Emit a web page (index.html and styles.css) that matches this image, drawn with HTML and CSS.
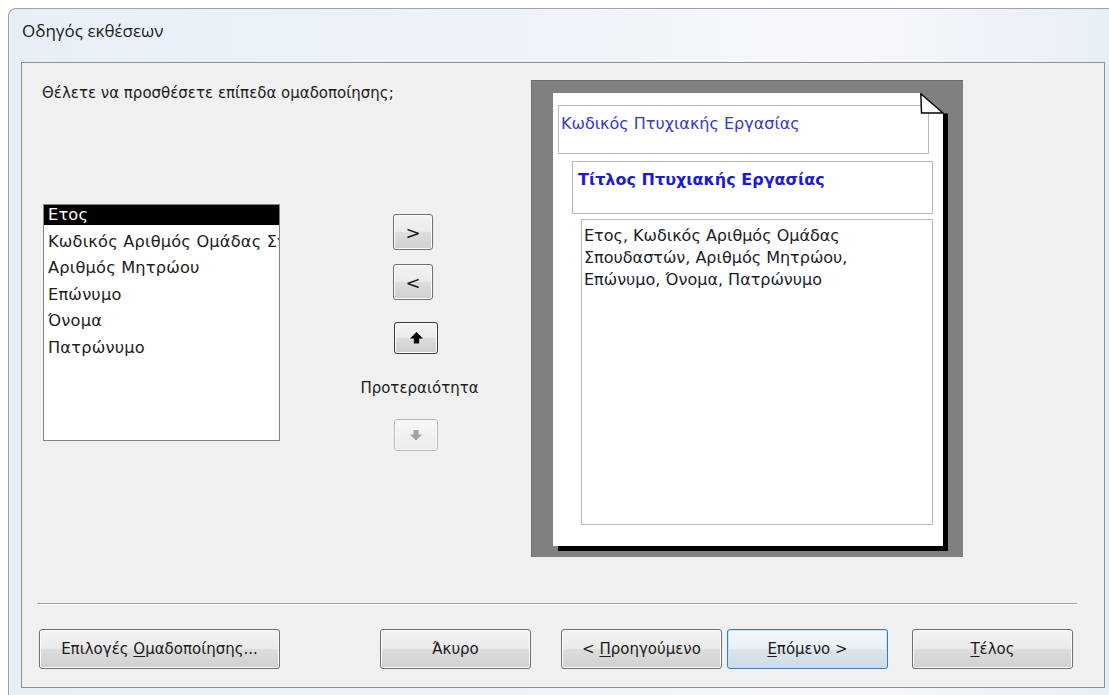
FILE: index.html
```html
<!DOCTYPE html>
<html lang="el">
<head>
<meta charset="utf-8">
<title>Οδηγός εκθέσεων</title>
<link rel="stylesheet" href="styles.css">
</head>
<body>
<div class="window">
  <div class="titlebar">Οδηγός εκθέσεων</div>
  <div class="client">
    <div class="main">
      <div class="left">
        <p class="question">Θέλετε να προσθέσετε επίπεδα ομαδοποίησης;</p>
        <ul class="fields">
          <li class="sel">Ετος</li>
          <li>Κωδικός Αριθμός Ομάδας Σπουδαστών</li>
          <li>Αριθμός Μητρώου</li>
          <li>Επώνυμο</li>
          <li>Όνομα</li>
          <li>Πατρώνυμο</li>
        </ul>
      </div>
      <div class="mid">
        <button class="btn sq add">&gt;</button>
        <button class="btn sq remove">&lt;</button>
        <button class="btn prio up" aria-label="Αύξηση προτεραιότητας">
          <svg width="13" height="12" viewBox="0 0 13 12"><polygon points="6.5,0 13,6.5 9.2,6.5 9.2,11.5 3.8,11.5 3.8,6.5 0,6.5" fill="#000"/></svg>
        </button>
        <div class="prio-label">Προτεραιότητα</div>
        <button class="btn prio down" disabled aria-label="Μείωση προτεραιότητας">
          <svg width="12" height="11" viewBox="0 0 12 11"><polygon points="6,10.5 12,4.5 8.5,4.5 8.5,0 3.5,0 3.5,4.5 0,4.5" fill="#a2a2a2"/></svg>
        </button>
      </div>
      <div class="preview">
        <div class="page">
          <div class="band b1">Κωδικός Πτυχιακής Εργασίας</div>
          <div class="band b2">Τίτλος Πτυχιακής Εργασίας</div>
          <div class="band b3">Ετος, Κωδικός Αριθμός Ομάδας<br>Σπουδαστών, Αριθμός Μητρώου,<br>Επώνυμο, Όνομα, Πατρώνυμο</div>
          <svg class="fold" width="28" height="21" viewBox="0 0 28 21">
            <polygon points="0,0 28,0 28,20.5 23,20.5" fill="#808080"/>
            <polygon points="0.8,0.8 23,20 1.5,20" fill="#fff" stroke="#000" stroke-width="1.4" stroke-linejoin="miter"/>
          </svg>
        </div>
      </div>
    </div>
    <div class="sep"></div>
    <div class="actions">
      <button class="btn wide"><span>Επιλογές <u>Ο</u>μαδοποίησης...</span></button>
      <button class="btn cancel"><span>Άκυρο</span></button>
      <button class="btn nav back"><span>&lt; <u>Π</u>ροηγούμενο</span></button>
      <button class="btn nav next default"><span><u>Ε</u>πόμενο &gt;</span></button>
      <button class="btn nav finish"><span><u>Τ</u>έλος</span></button>
    </div>
  </div>
</div>
</body>
</html>
```

FILE: styles.css
```css
html, body {
  margin: 0;
  padding: 0;
  background: #ffffff;
  overflow: hidden;
  width: 1109px;
  height: 695px;
}

body {
  font-family: "DejaVu Sans", "Liberation Sans", sans-serif;
  color: #1b1b1b;
}

/* outer window frame */
.window {
  margin: 8px 0 0 8px;
  width: 1120px;
  height: 700px;
  box-sizing: border-box;
  border-top: 1px solid #9aa3ad;
  border-left: 1px solid #9aa3ad;
  border-top-left-radius: 8px;
  background: linear-gradient(90deg, #e9eff7 0%, #eef3f9 45%, #f6f8fb 75%, #e8eef6 100%);
}

.titlebar {
  height: 53px;
  box-sizing: border-box;
  padding: 12px 0 0 13px;
  font-family: "Open Sans", "Noto Sans", sans-serif;
  font-size: 17px;
  line-height: 20px;
  color: #1a1a1a;
}

/* dialog client area */
.client {
  margin-left: 12px;
  width: 1084px;
  height: 626px;
  box-sizing: border-box;
  border: 1px solid #8d9196;
  background: #f0f0f0;
}

.main {
  display: flex;
  align-items: flex-start;
  padding-top: 17px;
}

.left {
  margin-left: 21px;
  width: 237px;
  flex: none;
}

.question {
  margin: 4px 0 0 -1px;
  font-size: 15px;
  line-height: 18px;
  white-space: nowrap;
}

.fields {
  list-style: none;
  margin: 102px 0 0 0;
  padding: 0;
  height: 237px;
  box-sizing: border-box;
  border: 1px solid #7f8489;
  background: #fff;
  overflow: hidden;
}

.fields li {
  height: 20px;
  line-height: 20px;
  margin-bottom: 6.5px;
  padding-left: 4px;
  font-size: 16.2px;
  letter-spacing: 0.2px;
  white-space: nowrap;
  overflow: hidden;
}

.fields li.sel {
  background: #000;
  color: #fff;
}

/* shared push-button look */
.btn {
  display: flex;
  align-items: center;
  justify-content: center;
  box-sizing: border-box;
  padding: 0;
  border: 1px solid #707070;
  border-radius: 3px;
  background: linear-gradient(180deg, #f3f3f3 0%, #ebebeb 48%, #dddddd 52%, #cfcfcf 100%);
  box-shadow: inset 0 0 0 1px #fbfbfb;
  font-family: "DejaVu Sans", "Liberation Sans", sans-serif;
  font-size: 15px;
  color: #1b1b1b;
  white-space: pre;
}

.btn u {
  text-underline-offset: 2px;
}

.mid {
  margin-left: 113px;
  width: 45px;
  flex: none;
  display: flex;
  flex-direction: column;
  align-items: flex-start;
}

.btn.sq {
  width: 40px;
  height: 36px;
  font-size: 18px;
  color: #1a1a1a;
}

.btn.add {
  margin-top: 134px;
}

.btn.remove {
  margin-top: 14px;
}

.btn.prio {
  width: 44px;
  height: 32px;
  margin-left: 1px;
}

.btn.up {
  margin-top: 22px;
  border-color: #3a3a3a;
}

.btn.down {
  margin-top: 21px;
  border-color: #b7babc;
  background: linear-gradient(180deg, #f7f7f7 0%, #f1f1f1 50%, #ebebeb 100%);
}

.prio-label {
  margin-top: 24px;
  align-self: center;
  height: 20px;
  line-height: 20px;
  font-size: 15px;
  white-space: nowrap;
  margin-left: 8px;
}

/* report layout preview */
.preview {
  margin-left: 93px;
  width: 432px;
  height: 477px;
  flex: none;
  box-sizing: border-box;
  background: #808080;
  border-top: 1px solid #6c6c6c;
  border-left: 1px solid #6c6c6c;
  padding: 12px 0 0 21px;
}

.page {
  position: relative;
  width: 390px;
  height: 453px;
  background: #fff;
  box-shadow: 5px 5px 0 #000;
  padding-top: 12px;
  box-sizing: border-box;
}

.fold {
  position: absolute;
  top: 0;
  right: -5px;
}

.band {
  box-sizing: border-box;
  border: 1px solid #b9b9b9;
  font-family: "DejaVu Sans", "Liberation Sans", sans-serif;
  white-space: nowrap;
}

.b1 {
  margin-left: 5px;
  width: 371px;
  height: 49px;
  padding: 8px 0 0 2px;
  font-size: 16px;
  line-height: 20px;
  color: #3737c8;
}

.b2 {
  margin: 7px 0 0 19px;
  width: 361px;
  height: 53px;
  padding: 8px 0 0 5px;
  font-size: 16px;
  line-height: 20px;
  font-weight: bold;
  color: #1c1ccf;
}

.b3 {
  margin: 5px 0 0 28px;
  width: 352px;
  height: 306px;
  padding: 5px 0 0 2px;
  font-size: 16px;
  line-height: 22px;
  color: #1b1b2a;
}

/* separator and wizard buttons */
.sep {
  margin: 46px 0 0 15px;
  width: 1040px;
  height: 1px;
  background: #a0a0a0;
  border-bottom: 1px solid #ffffff;
}

.actions {
  display: flex;
  margin-top: 24px;
  padding-left: 17px;
}

.actions .btn {
  height: 40px;
}

.btn.wide {
  width: 241px;
}

.btn.cancel {
  width: 151px;
  margin-left: 100px;
}

.btn.nav {
  width: 161px;
}

.btn.back {
  margin-left: 30px;
}

.btn.next {
  margin-left: 5px;
}

.btn.default {
  border-color: #3c7fb1;
  box-shadow: inset 0 0 0 1px #bfe3f8;
  background: linear-gradient(180deg, #f2f8fc 0%, #e9f1f7 48%, #dbe5ed 52%, #cfdbe5 100%);
}

.btn.finish {
  margin-left: 24px;
}
```
